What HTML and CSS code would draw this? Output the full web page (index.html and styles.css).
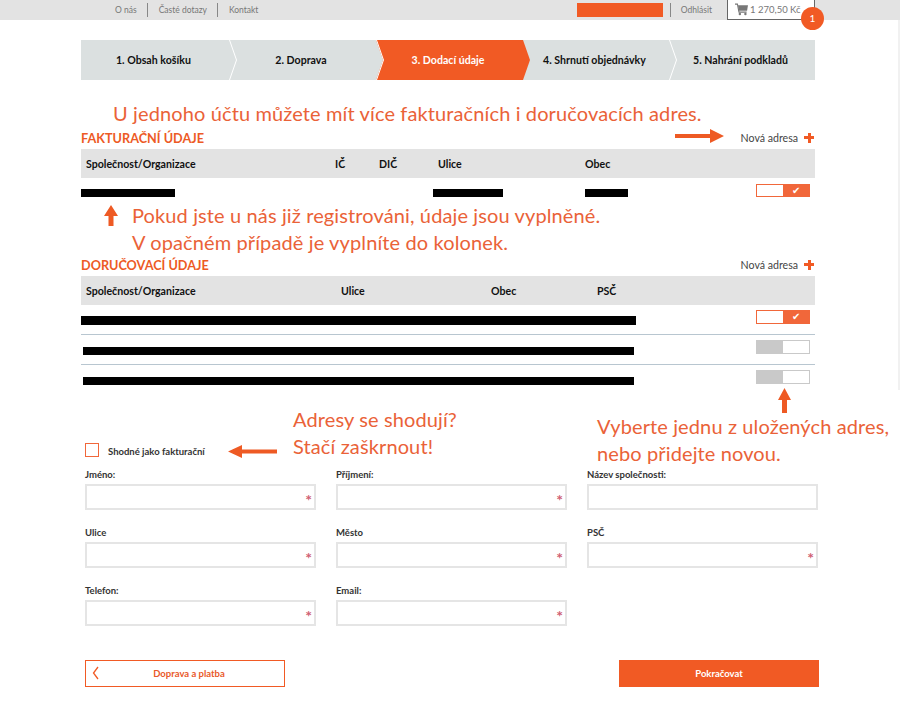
FILE: index.html
```html
<!DOCTYPE html>
<html lang="cs">
<head>
  <meta charset="UTF-8">
  <title>Dodací údaje</title>
  <link rel="stylesheet" href="styles.css">
</head>
<body>
  <div class="topbar">
    <div class="top-links">
      <a class="top-link">O nás</a>
      <a class="top-link">Časté dotazy</a>
      <a class="top-link">Kontakt</a>
    </div>
    <div class="top-right">
      <div class="user-name"></div>
      <a class="top-link logout">Odhlásit</a>
      <div class="cart">
        <svg class="cart-icon" width="13" height="13" viewBox="0 0 14 13">
          <path d="M0 .7h2.600l1.700 8.600h8.200" fill="none" stroke="#777" stroke-width="1.200"/>
          <path d="M3.200 2H14l-1 5.800H4.200z" fill="#777"/>
          <circle cx="5.200" cy="11.400" r="1.300" fill="#777"/>
          <circle cx="11.200" cy="11.400" r="1.300" fill="#777"/>
        </svg>
        1 270,50 Kč
        <span class="cart-badge">1</span>
      </div>
    </div>
  </div>
  <div class="scroll-track"></div>

  <div class="page">
    <div class="steps">
      <div class="step">1. Obsah košíku</div>
      <div class="step">2. Doprava</div>
      <div class="step step-active">3. Dodací údaje</div>
      <div class="step">4. Shrnutí objednávky</div>
      <div class="step">5. Nahrání podkladů</div>
    </div>

    <p class="note note-accounts">U jednoho účtu můžete mít více fakturačních i doručovacích adres.</p>

    <div class="section-head">
      <h2>FAKTURAČNÍ ÚDAJE</h2>
      <div class="new-address">
        <svg class="arrow arrow-new" width="49" height="14" viewBox="0 0 49 14"><path d="M0 5h35V0l14 7-14 7V9H0z"/></svg>
        Nová adresa <span class="plus"></span>
      </div>
    </div>
    <div class="table-head billing-cols">
      <span>Společnost/Organizace</span><span>IČ</span><span>DIČ</span><span>Ulice</span><span>Obec</span>
    </div>
    <div class="billing-row">
      <div class="billing-data">
        <i class="redact r-company"></i><span></span><span></span><i class="redact r-street"></i><i class="redact r-city"></i>
      </div>
      <div class="toggle toggle-on"><span></span><span class="toggle-mark">✔</span></div>
    </div>

    <div class="note-block">
      <svg class="arrow arrow-up" width="14" height="21" viewBox="0 0 14 21"><path d="M7 0l7 11H9.500v10h-5V11H0z"/></svg>
      <p class="note">Pokud jste u nás již registrováni, údaje jsou vyplněné.<br>V opačném případě je vyplníte do kolonek.</p>
    </div>

    <div class="section-head">
      <h2>DORUČOVACÍ ÚDAJE</h2>
      <div class="new-address">Nová adresa <span class="plus"></span></div>
    </div>
    <div class="table-head delivery-cols">
      <span>Společnost/Organizace</span><span>Ulice</span><span>Obec</span><span>PSČ</span>
    </div>
    <div class="address-row">
      <i class="redact r-wide"></i>
      <div class="toggle toggle-on"><span></span><span class="toggle-mark">✔</span></div>
    </div>
    <div class="address-row">
      <i class="redact r-inset"></i>
      <div class="toggle toggle-off"><span></span><span></span></div>
    </div>
    <div class="address-row address-last">
      <i class="redact r-inset"></i>
      <div class="toggle toggle-off"><span></span><span></span></div>
    </div>

    <div class="same-row">
      <div class="same-left">
        <span class="checkbox"></span>
        <span class="same-label">Shodné jako fakturační</span>
        <svg class="arrow arrow-left" width="49" height="13" viewBox="0 0 49 13"><path d="M49 4.500H14V0L0 6.500 14 13V8.500h35z"/></svg>
      </div>
      <p class="note note-same">Adresy se shodují?<br>Stačí zaškrnout!</p>
      <div class="note-pick">
        <svg class="arrow arrow-pick" width="13" height="25" viewBox="0 0 13 25"><path d="M6.500 0L13 12H9v13H4V12H0z"/></svg>
        <p class="note">Vyberte jednu z uložených adres,<br>nebo přidejte novou.</p>
      </div>
    </div>

    <div class="form-grid">
      <label class="field"><span class="field-label">Jméno:</span><span class="input input-req"></span></label>
      <label class="field"><span class="field-label">Příjmení:</span><span class="input input-req"></span></label>
      <label class="field"><span class="field-label">Název společnosti:</span><span class="input"></span></label>
      <label class="field"><span class="field-label">Ulice</span><span class="input input-req"></span></label>
      <label class="field"><span class="field-label">Město</span><span class="input input-req"></span></label>
      <label class="field"><span class="field-label">PSČ</span><span class="input input-req"></span></label>
      <label class="field"><span class="field-label">Telefon:</span><span class="input input-req"></span></label>
      <label class="field"><span class="field-label">Email:</span><span class="input input-req"></span></label>
    </div>

    <div class="form-actions">
      <a class="btn btn-back">
        <svg class="btn-chevron" width="7" height="14" viewBox="0 0 7 14"><path d="M6 1L1.500 7 6 13" fill="none" stroke="#f15a24" stroke-width="1.300"/></svg>
        Doprava a platba
      </a>
      <a class="btn btn-next">Pokračovat</a>
    </div>
  </div>
</body>
</html>
```

FILE: styles.css
```css
* {
  margin: 0;
  padding: 0;
  box-sizing: border-box;
}

body {
  font-family: Lato, 'Open Sans', sans-serif;
  width: 900px;
  height: 712px;
  background: #fff;
  color: #222;
  overflow: hidden;
  position: relative;
}

.scroll-track {
  position: absolute;
  right: 0;
  top: 20px;
  width: 2px;
  height: 370px;
  background: #f1f1f1;
}

.topbar {
  height: 20px;
  background: #e3e3e3;
  display: flex;
  justify-content: space-between;
  padding: 0 85px 0 102px;
}

.top-links,
.top-right {
  display: flex;
  align-items: center;
}

.top-link {
  font-size: 8.500px;
  color: #777;
  padding: 0 10.500px;
  border-left: 1px solid #888;
  line-height: 14px;
}

.top-link:first-child {
  border-left: none;
  padding-left: 13px;
}

.user-name {
  width: 86px;
  height: 14px;
  background: #f15a24;
  margin-right: 7px;
}

.logout {
  padding: 0 15px 0 10px;
}

.cart {
  position: relative;
  width: 88px;
  height: 20px;
  border: 1px solid #666;
  border-top: none;
  background: #fff;
  font-size: 9.500px;
  color: #777;
  display: flex;
  align-items: center;
  gap: 2px;
  padding-left: 7px;
  white-space: nowrap;
}

.cart-badge {
  position: absolute;
  right: -10px;
  top: 7px;
  width: 23px;
  height: 23px;
  border-radius: 50%;
  background: #f15a24;
  color: #fff;
  font-size: 10px;
  text-align: center;
  line-height: 23px;
}

.page {
  width: 734px;
  margin-left: 81px;
}

.steps {
  display: grid;
  grid-template-columns: 148px 147px 147px 146px 146px;
  margin-top: 20px;
  height: 40px;
}

.step {
  background: #dbe0e0;
  font-size: 10.600px;
  font-weight: 700;
  color: #111;
  display: flex;
  align-items: center;
  justify-content: center;
  position: relative;
  padding-right: 3px;
}

.step::after {
  content: '';
  position: absolute;
  z-index: 2;
  right: -7px;
  top: 0;
  width: 7px;
  height: 40px;
  background: #dbe0e0;
  clip-path: polygon(0 0, 100% 50%, 0 100%);
}

.step::before {
  content: '';
  position: absolute;
  z-index: 3;
  right: -8px;
  top: 0;
  width: 8px;
  height: 40px;
  background: #fff;
  clip-path: polygon(0 0, 1px 0, 100% 50%, 1px 100%, 0 100%, calc(100% - 1px) 50%);
}

.step:last-child::after,
.step:last-child::before {
  display: none;
}

.step-active {
  background: #f15a24;
  color: #fff;
}

.step-active::after {
  background: #f15a24;
}

.step-active::before {
  display: none;
}

.note {
  font-size: 20px;
  line-height: 27px;
  color: #ea6238;
  letter-spacing: .12px;
}

.note-accounts {
  padding-left: 32px;
  margin-top: 20px;
  height: 27px;
  white-space: nowrap;
}

.section-head {
  display: flex;
  justify-content: space-between;
  align-items: center;
  height: 21px;
  padding-bottom: 2px;
}

.note-accounts + .section-head {
  margin-top: 1px;
}

.section-head h2 {
  font-size: 12.700px;
  font-weight: 700;
  color: #ed5a25;
}

.new-address {
  position: relative;
  font-size: 10.600px;
  color: #444;
  display: flex;
  align-items: center;
  gap: 6px;
  padding-right: 1px;
}

.plus {
  width: 10px;
  height: 10px;
  background:
    linear-gradient(#f15a24, #f15a24) center / 10px 3px no-repeat,
    linear-gradient(#f15a24, #f15a24) center / 3px 10px no-repeat;
}

.arrow {
  fill: #ee5a24;
  flex: none;
}

.arrow-new {
  position: absolute;
  left: -66px;
  top: -3px;
}

.table-head {
  height: 29px;
  background: #e3e3e3;
  font-size: 10.600px;
  font-weight: 700;
  color: #111;
  align-items: center;
}

.billing-cols {
  display: grid;
  grid-template-columns: 249px 44px 59px 147px 1fr;
  padding-left: 5px;
}

.delivery-cols {
  display: grid;
  grid-template-columns: 255px 150px 106px 1fr;
  padding-left: 5px;
}

.billing-row {
  display: flex;
  justify-content: space-between;
  height: 24px;
}

.billing-data {
  flex: 1;
  display: grid;
  grid-template-columns: 254px 44px 54px 152px 1fr;
  align-items: start;
  padding-top: 11px;
}

.redact {
  display: block;
  height: 8px;
  background: #000;
}

.r-company {
  width: 94px;
}

.r-street {
  width: 70px;
}

.r-city {
  width: 43px;
}

.toggle {
  display: flex;
  width: 54px;
  height: 14px;
  margin: 5px 5px 0 0;
  border: 1px solid #c9c9c9;
  flex: none;
}

.billing-row .toggle {
  margin-top: 6px;
  height: 13px;
}

.toggle span {
  flex: 1;
  font-size: 10px;
  line-height: 12px;
  text-align: center;
}

.toggle-on {
  border: 1.500px solid #f1673a;
}

.toggle-on .toggle-mark {
  background: #f1673a;
  color: #fff;
  line-height: 10px;
}

.toggle-off span:first-child {
  background: #c9c9c9;
}

.note-block {
  display: flex;
  gap: 14px;
  padding-left: 23px;
  height: 53px;
  align-items: flex-start;
}

.note-block .arrow-up {
  margin-top: 3px;
}

.address-row {
  display: flex;
  justify-content: space-between;
  align-items: flex-start;
  height: 30px;
  border-bottom: 1px solid #b8c6d0;
}

.address-last {
  border-bottom: none;
}

.r-wide {
  width: 555px;
  height: 9px;
  margin-top: 11px;
}

.r-inset {
  width: 551px;
  margin-top: 12px;
  margin-left: 2px;
}

.same-row {
  position: relative;
  height: 74px;
}

.same-left {
  position: absolute;
  left: 4px;
  top: 47px;
  display: flex;
  align-items: center;
}

.checkbox {
  width: 14px;
  height: 14px;
  border: 1.500px solid #f1673a;
  margin-right: 9px;
}

.same-label {
  font-size: 9.500px;
  font-weight: 700;
  color: #333;
  margin-right: 23px;
  padding-top: 3px;
}

.arrow-left {
  margin-top: 3px;
}

.note-same {
  position: absolute;
  left: 212px;
  top: 11px;
}

.note-pick {
  position: absolute;
  left: 516px;
  top: -7px;
  white-space: nowrap;
}

.arrow-pick {
  display: block;
  margin-left: 181px;
}

.form-grid {
  display: grid;
  grid-template-columns: repeat(3, 231px);
  column-gap: 20px;
  margin-left: 4px;
}

.field {
  display: block;
  height: 58px;
}

.field-label {
  display: block;
  font-size: 9.500px;
  font-weight: 700;
  color: #333;
  height: 15px;
  line-height: 11px;
}

.input {
  display: block;
  position: relative;
  height: 26px;
  border: 2px solid #e5e5e5;
  background: #fff;
}

.input-req::after {
  content: '*';
  position: absolute;
  right: 2px;
  top: 6px;
  color: #cf5f73;
  font-size: 16px;
  font-weight: 700;
  line-height: 16px;
}

.form-actions {
  display: flex;
  justify-content: space-between;
  margin: 17px -4px 0 4px;
}

.btn {
  position: relative;
  width: 200px;
  height: 27px;
  font-size: 9.500px;
  font-weight: 700;
  display: flex;
  align-items: center;
  justify-content: center;
}

.btn-back {
  border: 1.500px solid #f15a24;
  color: #e9592a;
  padding-left: 8px;
}

.btn-chevron {
  position: absolute;
  left: 6px;
  top: 5px;
}

.btn-next {
  background: #f15a24;
  color: #fff;
}
```
